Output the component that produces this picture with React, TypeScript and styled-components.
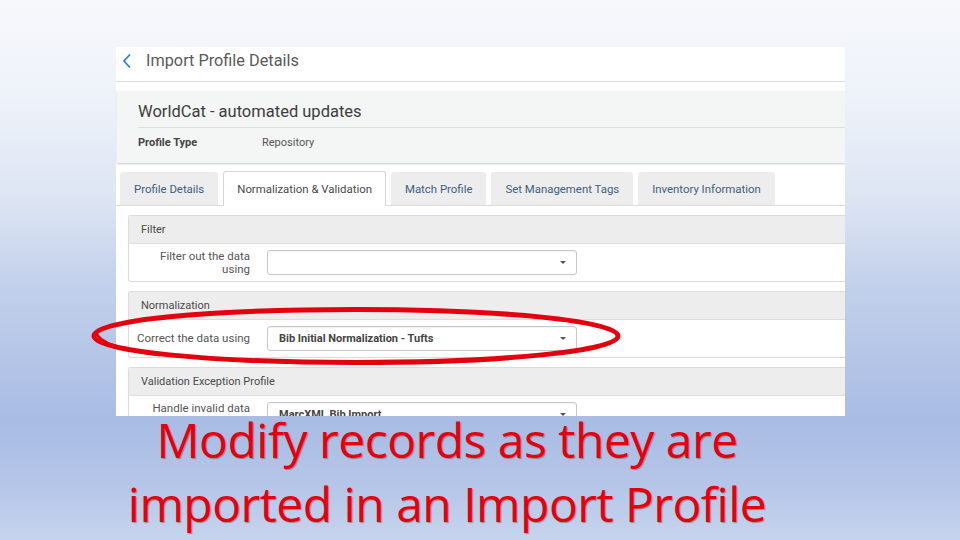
import React from 'react';
import styled, {createGlobalStyle} from "styled-components";

const GlobalStyle = createGlobalStyle`
  html, body {
    margin: 0;
    padding: 0;
  }
  body {
    font-family: Roboto, "Open Sans", sans-serif;
  }
`

type TabProps = {
    active?: boolean
}

function App() {
    return (
        <Slide>
            <GlobalStyle/>
            <Shot>
                <Header>
                    <Chevron viewBox="0 0 10 16">
                        <path d="M8 1.5 L2 8 L8 14.5" fill="none" stroke="#3b7fc4" strokeWidth="1.8"/>
                    </Chevron>
                    <HeaderTitle>Import Profile Details</HeaderTitle>
                </Header>

                <ProfileCard>
                    <ProfileName>WorldCat - automated updates</ProfileName>
                    <ProfileRow>
                        <ProfileKey>Profile Type</ProfileKey>
                        <ProfileValue>Repository</ProfileValue>
                    </ProfileRow>
                </ProfileCard>

                <Tabs>
                    <Tab>Profile Details</Tab>
                    <Tab active>Normalization &amp; Validation</Tab>
                    <Tab>Match Profile</Tab>
                    <Tab>Set Management Tags</Tab>
                    <Tab>Inventory Information</Tab>
                </Tabs>

                <Content>
                    <Section>
                        <SectionHead>Filter</SectionHead>
                        <SectionBody>
                            <FieldLabel>Filter out the data using</FieldLabel>
                            <Select><SelectText/><Caret/></Select>
                        </SectionBody>
                    </Section>
                    <Section>
                        <SectionHead>Normalization</SectionHead>
                        <SectionBody>
                            <FieldLabel>Correct the data using</FieldLabel>
                            <Select><SelectText>Bib Initial Normalization - Tufts</SelectText><Caret/></Select>
                        </SectionBody>
                    </Section>
                    <Section>
                        <SectionHead>Validation Exception Profile</SectionHead>
                        <SectionBody>
                            <FieldLabel>Handle invalid data using</FieldLabel>
                            <Select><SelectText>MarcXML Bib Import</SelectText><Caret/></Select>
                        </SectionBody>
                    </Section>
                </Content>
            </Shot>

            <Caption>
                <CaptionLine>Modify records as they are</CaptionLine>
                <CaptionLine>imported in an Import Profile</CaptionLine>
            </Caption>

            <Circle viewBox="0 0 532 60">
                <path
                    d="M266 3.5 C412 3.5 528 15 528 30 C528 45 412 56.5 266 56.5 C118 56.5 4 45 4 30 C4 14 118 3.5 266 3.5 Z"
                    fill="none" stroke="#e4000c" strokeWidth="5"/>
                <path d="M6 26 C8 36 30 44 70 49" fill="none" stroke="#e4000c" strokeWidth="3"/>
            </Circle>
        </Slide>
    );
}

export default App;

const Slide = styled.div`
  position: relative;
  width: 960px;
  height: 540px;
  overflow: hidden;
  background: linear-gradient(180deg, #f6f8fc 0%, #eef2f9 18%, #dde5f3 37%, #c3d1eb 52%, #a9bce4 78%, #b6c6e8 90%, #c6d4ed 100%);
  display: flex;
  flex-direction: column;
  align-items: flex-start;
`
const Shot = styled.div`
  margin: 47px 0 0 116px;
  width: 729px;
  height: 369px;
  overflow: hidden;
  background: #fff;
  flex-shrink: 0;
`
const Header = styled.div`
  height: 35px;
  box-sizing: border-box;
  border-bottom: 1px solid #dcdcdc;
  display: flex;
  align-items: center;
  padding: 0 0 7px 6px;
  gap: 14px;
`
const Chevron = styled.svg`
  width: 10px;
  height: 16px;
`
const HeaderTitle = styled.div`
  font-size: 16.3px;
  color: #5a5a5a;
`
const ProfileCard = styled.div`
  margin: 9px 0 0 1px;
  background: #f4f5f5;
  box-shadow: 0 1px 2px rgba(0, 0, 0, 0.22);
  padding: 0 0 0 21px;
`
const ProfileName = styled.div`
  border-bottom: 1px solid #dedede;
  display: flex;
  align-items: center;
  padding-top: 5px;
  box-sizing: border-box;
  height: 37px;
  font-size: 16.5px;
  color: #3d3d3d;
`
const ProfileRow = styled.div`
  height: 35px;
  box-sizing: border-box;
  padding-bottom: 6px;
  display: flex;
  align-items: center;
  font-size: 11px;
`
const ProfileKey = styled.div`
  width: 124px;
  font-weight: 700;
  color: #444;
`
const ProfileValue = styled.div`
  color: #555;
`
const Tabs = styled.div`
  margin-top: 8px;
  padding-left: 4px;
  display: flex;
  align-items: flex-end;
  gap: 5px;
  border-bottom: 1px solid #dcdcdc;
  height: 34px;
`
const Tab = styled.div<TabProps>`
  box-sizing: border-box;
  padding: 0 13px;
  display: flex;
  align-items: center;
  font-size: 11.4px;
  border-radius: 3px 3px 0 0;
  background: ${props => props.active ? "#fff" : "#ededed"};
  color: ${props => props.active ? "#4a4a4a" : "#3f5f80"};
  border: 1px solid ${props => props.active ? "#d6d6d6" : "transparent"};
  border-bottom: none;
  margin-bottom: ${props => props.active ? "-1px" : "0"};
  height: ${props => props.active ? "35px" : "33px"};
`
const Content = styled.div`
  padding: 9px 0 0 12px;
  display: flex;
  flex-direction: column;
  gap: 9px;
`
const Section = styled.div`
  border: 1px solid #dcdcdc;
  border-right: none;
  border-radius: 3px 0 0 3px;
`
const SectionHead = styled.div`
  height: 27px;
  background: #ededed;
  border-bottom: 1px solid #dcdcdc;
  display: flex;
  align-items: center;
  padding-left: 12px;
  font-size: 11px;
  color: #4a4a4a;
`
const SectionBody = styled.div`
  height: 37px;
  display: flex;
  align-items: center;
`
const FieldLabel = styled.div`
  width: 118px;
  margin-left: 3px;
  flex-shrink: 0;
  padding-right: 17px;
  text-align: right;
  font-size: 11.5px;
  line-height: 13px;
  color: #555;
`
const Select = styled.div`
  width: 310px;
  height: 25px;
  box-sizing: border-box;
  border: 1px solid #c8c8c8;
  border-radius: 3px;
  display: flex;
  align-items: center;
  padding: 0 10px 0 11px;
  box-shadow: inset 0 1px 1px rgba(0, 0, 0, 0.05);
`
const SelectText = styled.div`
  flex: 1;
  font-size: 11px;
  font-weight: 700;
  color: #444;
`
const Caret = styled.div`
  width: 0;
  height: 0;
  border-left: 3px solid transparent;
  border-right: 3px solid transparent;
  border-top: 3px solid #555;
`
const Caption = styled.div`
  width: 662px;
  margin: -8px 0 0 116px;
  text-align: center;
  font-family: "Open Sans", sans-serif;
  font-size: 48px;
  letter-spacing: -0.5px;
  line-height: 64px;
  color: #e6000e;
  text-shadow: 1px 1px 1px rgba(90, 0, 0, 0.35);
`
const CaptionLine = styled.div`
  white-space: nowrap;
`
const Circle = styled.svg`
  position: absolute;
  left: 90px;
  top: 306px;
  width: 532px;
  height: 60px;
  overflow: visible;
`
